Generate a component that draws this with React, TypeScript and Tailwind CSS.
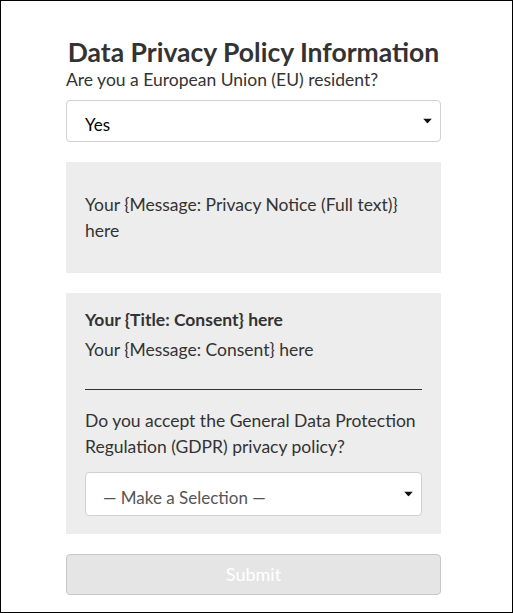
import React from "react";

function Caret() {
  return (
    <svg width="9" height="5" viewBox="0 0 9 5" className="absolute right-[8px] top-1/2 -translate-y-1/2">
      <path d="M0 0 L9 0 L4.5 5 Z" fill="#111" />
    </svg>
  );
}

export default function App() {
  return (
    <div
      className="w-[513px] h-[613px] border border-black bg-white text-[#333]"
      style={{ fontFamily: "Lato, 'Noto Sans', sans-serif" }}
    >
      <div className="ml-[65px] w-[375px] pt-[34px]">
        <h1 className="text-center text-[26.5px] leading-[34px] font-bold text-[#333] whitespace-nowrap">
          Data Privacy Policy Information
        </h1>
        <div className="text-[17.5px] leading-[22px]">Are you a European Union (EU) resident?</div>
        <div className="relative mt-[9px] h-[42px] rounded-[4px] border border-[#d0d0d0] bg-white flex items-center pl-[18px] pt-[7px] text-[17px] text-black">
          Yes
          <Caret />
        </div>
        <div className="mt-[20px] bg-[#ededed] px-[19px] pt-[30px] pb-[29px] text-[17.5px] leading-[26px]">
          Your {"{"}Message: Privacy Notice (Full text){"}"} here
        </div>
        <div className="mt-[20px] bg-[#ededed] px-[19px] pt-[12px] pb-[18px] text-[17.5px] leading-[26px]">
          <div className="font-bold leading-[30px]">Your {"{"}Title: Consent{"}"} here</div>
          <div className="leading-[30px]">Your {"{"}Message: Consent{"}"} here</div>
          <div className="mt-[24px] h-[1px] bg-[#333]" />
          <div className="mt-[18px]">Do you accept the General Data Protection Regulation (GDPR) privacy policy?</div>
          <div className="relative mt-[12px] h-[44px] rounded-[4px] border border-[#d0d0d0] bg-white flex items-center pl-[17px] pt-[7px] text-[17px] text-[#555]">
            — Make a Selection —
            <Caret />
          </div>
        </div>
        <button className="mt-[20px] w-full h-[41px] rounded-[4px] border border-[#c8c8c8] bg-[#e5e5e5] text-white text-[18px]">
          Submit
        </button>
      </div>
    </div>
  );
}
